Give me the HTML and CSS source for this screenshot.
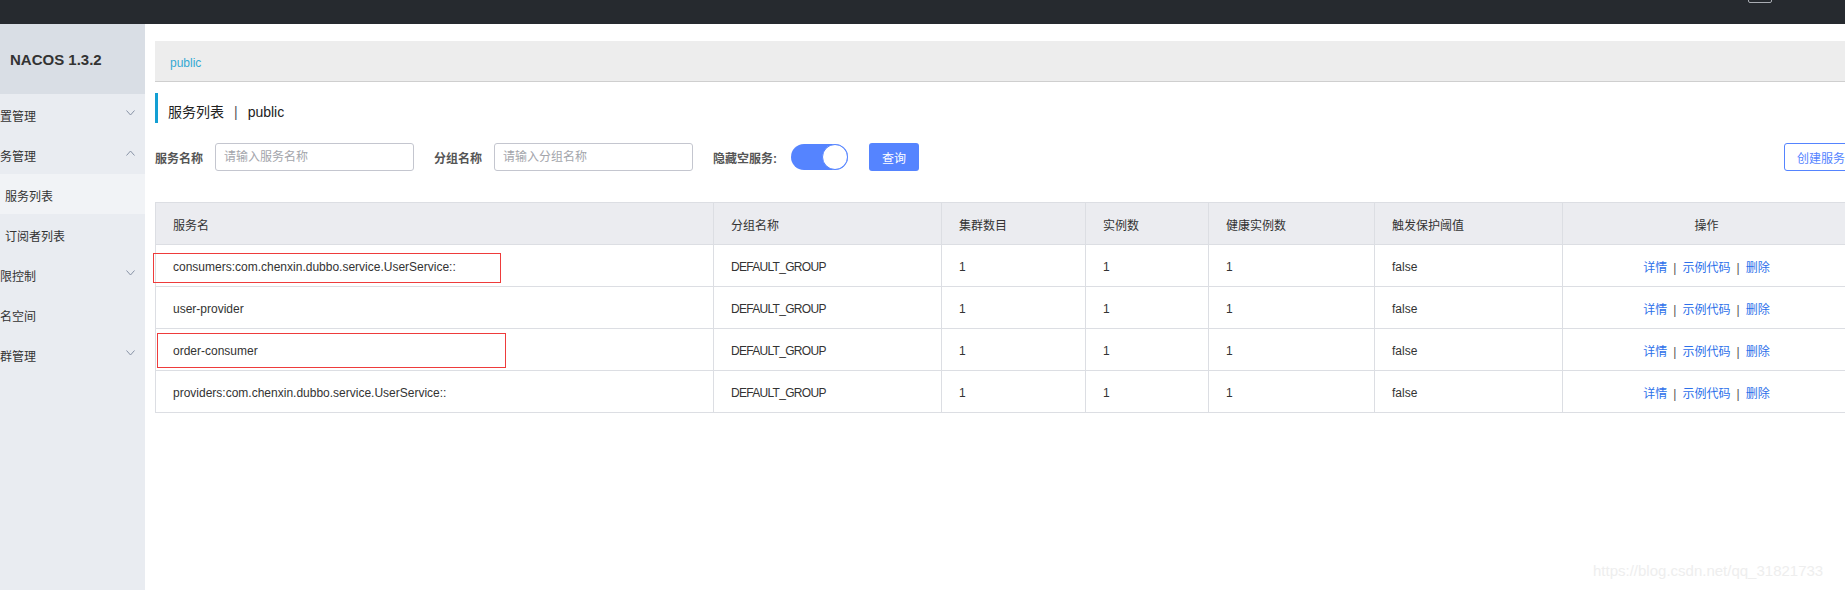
FILE: index.html
```html
<!DOCTYPE html>
<html lang="zh-CN">
<head>
<meta charset="utf-8">
<title>Nacos</title>
<link rel="stylesheet" href="styles.css">
</head>
<body>
<div class="topbar"><span class="topbar-box"></span></div>
<div class="layout">
  <aside class="sidebar">
    <div class="logo">NACOS 1.3.2</div>
    <ul class="menu">
      <li class="menu-item"><span>配置管理</span><svg class="chev" width="9" height="6" viewBox="0 0 9 6"><path d="M0.5 0.5 L4.5 5 L8.5 0.5" fill="none" stroke="#8792a6" stroke-width="1"/></svg></li>
      <li class="menu-item"><span>服务管理</span><svg class="chev" width="9" height="6" viewBox="0 0 9 6"><path d="M0.5 5.5 L4.5 1 L8.5 5.5" fill="none" stroke="#8792a6" stroke-width="1"/></svg></li>
      <li class="menu-item sub active"><span>服务列表</span></li>
      <li class="menu-item sub"><span>订阅者列表</span></li>
      <li class="menu-item"><span>权限控制</span><svg class="chev" width="9" height="6" viewBox="0 0 9 6"><path d="M0.5 0.5 L4.5 5 L8.5 0.5" fill="none" stroke="#8792a6" stroke-width="1"/></svg></li>
      <li class="menu-item"><span>命名空间</span></li>
      <li class="menu-item"><span>集群管理</span><svg class="chev" width="9" height="6" viewBox="0 0 9 6"><path d="M0.5 0.5 L4.5 5 L8.5 0.5" fill="none" stroke="#8792a6" stroke-width="1"/></svg></li>
    </ul>
  </aside>
  <main class="main">
    <div class="content">
      <div class="breadcrumb"><span class="crumb">public</span></div>
      <div class="page-title">服务列表<span class="title-sep">|</span>public</div>
      <div class="search-row">
        <span class="field-label">服务名称</span>
        <input class="field-input" type="text" placeholder="请输入服务名称">
        <span class="field-label">分组名称</span>
        <input class="field-input" type="text" placeholder="请输入分组名称">
        <span class="field-label field-label-switch">隐藏空服务:</span>
        <span class="switch"><span class="switch-knob"></span></span>
        <button class="btn-primary">查询</button>
        <button class="btn-outline">创建服务</button>
      </div>
      <div class="table-wrap">
        <table class="svc-table">
          <colgroup>
            <col class="c1"><col class="c2"><col class="c3"><col class="c4"><col class="c5"><col class="c6"><col class="c7">
          </colgroup>
          <thead>
            <tr><th>服务名</th><th>分组名称</th><th>集群数目</th><th>实例数</th><th>健康实例数</th><th>触发保护阈值</th><th class="center">操作</th></tr>
          </thead>
          <tbody>
            <tr><td>consumers:com.chenxin.dubbo.service.UserService::</td><td class="narrow">DEFAULT_GROUP</td><td>1</td><td>1</td><td>1</td><td>false</td><td class="center"><a class="op">详情</a><span class="op-sep">|</span><a class="op">示例代码</a><span class="op-sep">|</span><a class="op">删除</a></td></tr>
            <tr><td>user-provider</td><td class="narrow">DEFAULT_GROUP</td><td>1</td><td>1</td><td>1</td><td>false</td><td class="center"><a class="op">详情</a><span class="op-sep">|</span><a class="op">示例代码</a><span class="op-sep">|</span><a class="op">删除</a></td></tr>
            <tr><td>order-consumer</td><td class="narrow">DEFAULT_GROUP</td><td>1</td><td>1</td><td>1</td><td>false</td><td class="center"><a class="op">详情</a><span class="op-sep">|</span><a class="op">示例代码</a><span class="op-sep">|</span><a class="op">删除</a></td></tr>
            <tr><td>providers:com.chenxin.dubbo.service.UserService::</td><td class="narrow">DEFAULT_GROUP</td><td>1</td><td>1</td><td>1</td><td>false</td><td class="center"><a class="op">详情</a><span class="op-sep">|</span><a class="op">示例代码</a><span class="op-sep">|</span><a class="op">删除</a></td></tr>
          </tbody>
        </table>
        <div class="mark mark-1"></div>
        <div class="mark mark-2"></div>
      </div>
    </div>
  </main>
</div>
<div class="watermark">https://blog.csdn.net/qq_31821733</div>
</body>
</html>
```
FILE: styles.css
```css
* { box-sizing: border-box; }
html, body {
  margin: 0;
  padding: 0;
  width: 1845px;
  height: 590px;
  overflow: hidden;
  background: #fff;
  font-family: "Liberation Sans", "Noto Sans CJK SC", sans-serif;
  font-size: 12px;
  color: #333;
}
.topbar {
  height: 24px;
  background: #262a2f;
  display: flex;
  justify-content: flex-end;
  align-items: flex-start;
  padding-right: 73px;
  overflow: hidden;
}
.topbar-box {
  display: block;
  width: 24px;
  height: 11px;
  margin-top: -8px;
  border: 1px solid #a9adb3;
  border-radius: 2px;
}
.layout {
  display: flex;
  height: 566px;
}
.sidebar {
  width: 145px;
  flex-shrink: 0;
  background: #e9ecf1;
  overflow: hidden;
}
.logo {
  height: 70px;
  line-height: 72px;
  background: #d9dee5;
  padding-left: 10px;
  font-weight: bold;
  font-size: 15px;
  color: #333;
  white-space: nowrap;
}
.menu {
  list-style: none;
  margin: 0 0 0 -12px;
  padding: 0;
  width: 157px;
}
.menu-item {
  height: 40px;
  display: flex;
  align-items: center;
  justify-content: space-between;
  padding: 2px 10px 0 0;
  color: #333;
  white-space: nowrap;
}
.menu-item.sub { padding-left: 17px; }
.menu-item.active { background: #f1f3f6; }
.chev { display: block; margin-top: -4px; }
.main {
  flex: 1;
  padding: 17px 0 0 10px;
  overflow: hidden;
}
.content {
  width: 1703px;
}
.breadcrumb {
  height: 41px;
  background: #ededed;
  border-bottom: 1px solid #cfcfcf;
  padding-left: 15px;
  display: flex;
  align-items: center;
  padding-top: 4px;
}
.crumb { color: #35a9d3; font-size: 12px; }
.page-title {
  margin-top: 11px;
  height: 30px;
  line-height: 30px;
  padding-top: 4px;
  border-left: 3px solid #139fd3;
  padding-left: 10px;
  font-size: 14px;
  color: #222;
}
.title-sep { margin: 0 10px; color: #555; }
.search-row {
  margin-top: 20px;
  height: 28px;
  display: flex;
  align-items: center;
}
.field-label {
  font-weight: bold;
  color: #555;
  margin-right: 12px;
  white-space: nowrap;
}
.field-label-switch { margin-right: 14px; }
.field-input {
  width: 199px;
  height: 28px;
  border: 1px solid #c4c6cf;
  border-radius: 3px;
  padding: 0 8px;
  margin: 0 20px 0 0;
  font-family: inherit;
  font-size: 12px;
  color: #333;
  outline: none;
}
.field-input::placeholder { color: #a3a5ab; }
.switch {
  width: 57px;
  height: 26px;
  border-radius: 13px;
  background: #5584ff;
  display: flex;
  justify-content: flex-end;
  margin-right: 21px;
}
.switch-knob {
  width: 26px;
  height: 26px;
  border-radius: 50%;
  background: #fff;
  border: 1px solid #5584ff;
}
.btn-primary {
  width: 50px;
  height: 28px;
  border: none;
  border-radius: 3px;
  background: #5584ff;
  color: #fff;
  font-family: inherit;
  font-size: 12px;
  padding: 0;
}
.btn-outline {
  margin-left: auto;
  width: 74px;
  height: 28px;
  border: 1px solid #5584ff;
  border-radius: 3px;
  background: #fff;
  color: #5584ff;
  font-family: inherit;
  font-size: 12px;
  text-align: left;
  padding: 0 0 0 12px;
  white-space: nowrap;
}
.table-wrap {
  position: relative;
  margin-top: 31px;
}
.svc-table {
  width: 1703px;
  table-layout: fixed;
  border-collapse: collapse;
}
.c1 { width: 558px; }
.c2 { width: 228px; }
.c3 { width: 144px; }
.c4 { width: 123px; }
.c5 { width: 166px; }
.c6 { width: 188px; }
.c7 { width: 296px; }
.svc-table th, .svc-table td {
  border: 1px solid #dcdee3;
  height: 42px;
  padding: 2px 17px 0;
  text-align: left;
  font-weight: normal;
  color: #333;
  white-space: nowrap;
  font-size: 12px;
}
.svc-table th { background: #ebecf0; }
.svc-table td.narrow { letter-spacing: -0.7px; }
.svc-table .center { text-align: center; padding-left: 0; padding-right: 8px; }
.op { color: #2c70ea; text-decoration: none; }
.op-sep { color: #555; margin: 0 6px; }
.mark {
  position: absolute;
  border: 1px solid #ee3b3b;
}
.mark-1 { left: -2px; top: 51px; width: 348px; height: 30px; }
.mark-2 { left: 2px; top: 131px; width: 349px; height: 35px; }
.watermark {
  position: absolute;
  left: 1593px;
  top: 562px;
  font-family: "Liberation Sans", sans-serif;
  font-size: 15px;
  color: #eeeeee;
  white-space: nowrap;
}
```
